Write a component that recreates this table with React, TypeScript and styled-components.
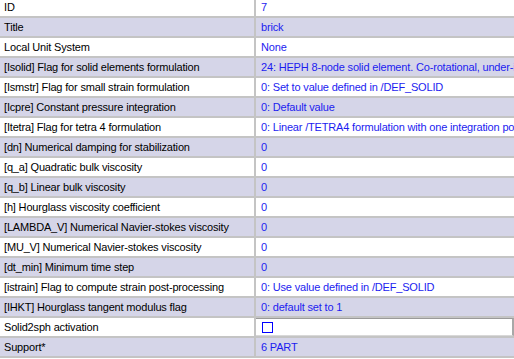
import React from 'react'
import styled, { createGlobalStyle } from 'styled-components'

const GlobalStyle = createGlobalStyle`
    html, body {
        margin: 0;
        padding: 0;
        background: #ffffff;
        overflow: hidden;
    }
    body {
        font-family: 'Liberation Sans', Arial, sans-serif;
        font-size: 11px;
        letter-spacing: -0.17px;
    }
`

type Row = {
    label: string
    value?: string
    checkbox?: boolean
}

const rows: Row[] = [
    { label: 'ID', value: '7' },
    { label: 'Title', value: 'brick' },
    { label: 'Local Unit System', value: 'None' },
    {
        label: '[Isolid] Flag for solid elements formulation',
        value: '24: HEPH 8-node solid element. Co-rotational, under-integrated (1 Gauss point)',
    },
    {
        label: '[Ismstr] Flag for small strain formulation',
        value: '0: Set to value defined in /DEF_SOLID',
    },
    { label: '[Icpre] Constant pressure integration', value: '0: Default value' },
    {
        label: '[Itetra] Flag for tetra 4 formulation',
        value: '0: Linear /TETRA4 formulation with one integration point',
    },
    { label: '[dn] Numerical damping for stabilization', value: '0' },
    { label: '[q_a] Quadratic bulk viscosity', value: '0' },
    { label: '[q_b] Linear bulk viscosity', value: '0' },
    { label: '[h] Hourglass viscosity coefficient', value: '0' },
    { label: '[LAMBDA_V] Numerical Navier-stokes viscosity', value: '0' },
    { label: '[MU_V] Numerical Navier-stokes viscosity', value: '0' },
    { label: '[dt_min] Minimum time step', value: '0' },
    {
        label: '[istrain] Flag to compute strain post-processing',
        value: '0: Use value defined in /DEF_SOLID',
    },
    { label: '[IHKT] Hourglass tangent modulus flag', value: '0: default set to 1' },
    { label: 'Solid2sph activation', checkbox: true },
    { label: 'Support*', value: '6 PART' },
]

const App = () => {
    return (
        <>
            <GlobalStyle />
            <Sheet>
                {rows.map((row, i) => (
                    <React.Fragment key={row.label}>
                        <Label $shaded={i % 2 === 1}>{row.label}</Label>
                        {row.checkbox ? (
                            <EditCell>
                                <CheckBox />
                            </EditCell>
                        ) : (
                            <Value $shaded={i % 2 === 1}>{row.value}</Value>
                        )}
                    </React.Fragment>
                ))}
            </Sheet>
        </>
    )
}

export default App

// property grid: name column on the left, value column on the right
const Sheet = styled.div`
    display: grid;
    grid-template-columns: 254px 1fr;
    column-gap: 2px;
    row-gap: 2px;
    margin-top: -2px;
    padding-bottom: 2px;
    width: 514px;
    background: #c4c4c4;
`

const Cell = styled.div<{ $shaded?: boolean }>`
    height: 18px;
    line-height: 18px;
    white-space: nowrap;
    overflow: hidden;
    background: ${(p) => (p.$shaded ? '#d5d5e8' : '#ffffff')};
`

const Label = styled(Cell)`
    padding-left: 4px;
    color: #000000;
`

const Value = styled(Cell)`
    padding-left: 5px;
    color: #1c1cf0;
`

// the boolean row shows a sunken edit box with a checkbox
const EditCell = styled.div`
    height: 18px;
    display: flex;
    align-items: center;
    padding-left: 6px;
    background: #ffffff;
    box-sizing: border-box;
    border-top: 1px solid #9a9a9a;
    border-right: 2px solid #a8a8a8;
    border-bottom: 1px solid #d8d8d8;
`

const CheckBox = styled.span`
    display: block;
    width: 9px;
    height: 9px;
    border: 1px solid #0000ff;
    background: #ffffff;
`
